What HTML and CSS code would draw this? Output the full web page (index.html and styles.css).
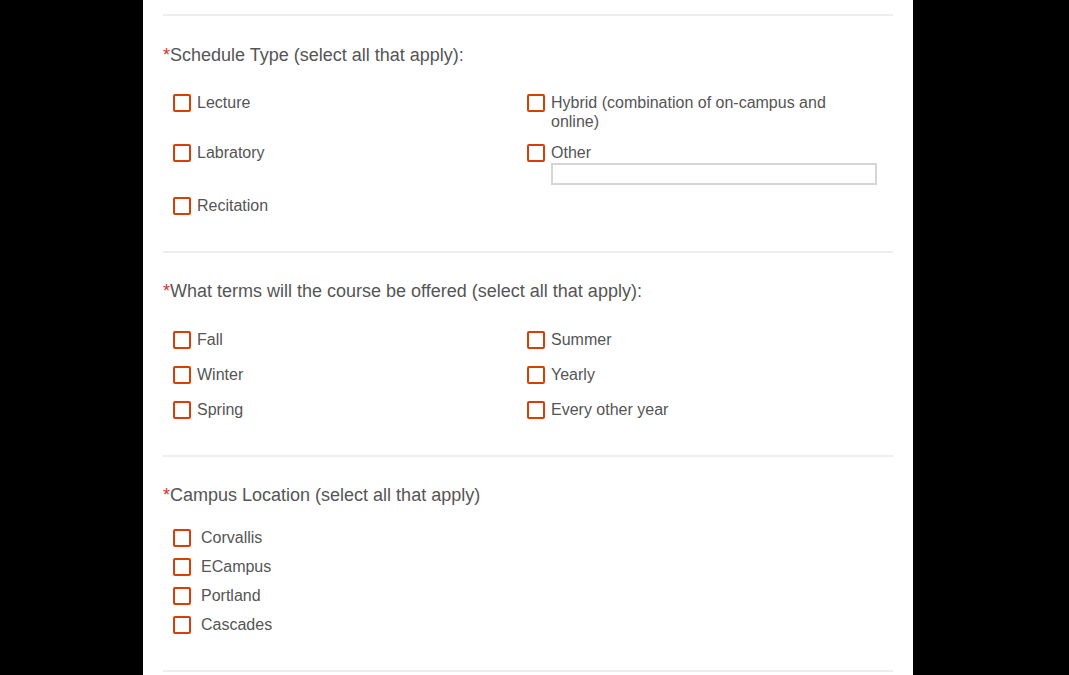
FILE: index.html
```html
<!DOCTYPE html>
<html>
<head>
<meta charset="utf-8">
<link rel="stylesheet" href="styles.css">
</head>
<body>
<div class="panel">
  <div class="section s1">
    <div class="question"><span class="req">*</span>Schedule Type (select all that apply):</div>
    <div class="grid g1">
      <div class="opt"><span class="box"></span><span class="lbl">Lecture</span></div>
      <div class="opt"><span class="box"></span><span class="lbl">Hybrid (combination of on-campus and online)</span></div>
      <div class="opt"><span class="box"></span><span class="lbl">Labratory</span></div>
      <div class="opt"><span class="box"></span><span class="lbl">Other<span class="other"></span></span></div>
      <div class="opt"><span class="box"></span><span class="lbl">Recitation</span></div>
    </div>
  </div>
  <div class="section s2">
    <div class="question"><span class="req">*</span>What terms will the course be offered (select all that apply):</div>
    <div class="grid g2">
      <div class="opt"><span class="box"></span><span class="lbl">Fall</span></div>
      <div class="opt"><span class="box"></span><span class="lbl">Summer</span></div>
      <div class="opt"><span class="box"></span><span class="lbl">Winter</span></div>
      <div class="opt"><span class="box"></span><span class="lbl">Yearly</span></div>
      <div class="opt"><span class="box"></span><span class="lbl">Spring</span></div>
      <div class="opt"><span class="box"></span><span class="lbl">Every other year</span></div>
    </div>
  </div>
  <div class="section s3">
    <div class="question q3"><span class="req">*</span>Campus Location (select all that apply)</div>
    <div class="list">
      <div class="opt wide"><span class="box"></span><span class="lbl">Corvallis</span></div>
      <div class="opt wide"><span class="box"></span><span class="lbl">ECampus</span></div>
      <div class="opt wide"><span class="box"></span><span class="lbl">Portland</span></div>
      <div class="opt wide"><span class="box"></span><span class="lbl">Cascades</span></div>
    </div>
  </div>
  <div class="section last"></div>
</div>
</body>
</html>
```
FILE: styles.css
```css
html, body {
  margin: 0;
  padding: 0;
  background: #000;
  height: 100%;
  overflow: hidden;
}
body {
  font-family: "Liberation Sans", Arial, sans-serif;
  color: #555555;
}
.panel {
  width: 730px;
  margin-left: 143px;
  padding: 14px 20px 0;
  background: #fff;
  min-height: 100%;
}
.section {
  border-top: 2px solid #eeeeee;
  padding: 28px 0 36px;
}
.s1 {
  padding-top: 29px;
}
.section.last {
  padding: 0;
  height: 20px;
}
.question {
  font-size: 18px;
  line-height: 20px;
  margin-bottom: 28px;
}
.s2 .question {
  margin-bottom: 29px;
}
.q3 {
  margin-bottom: 23px;
}
.req {
  color: #d9322b;
}
.grid {
  display: grid;
  grid-template-columns: 354px 360px;
}
.g1 {
  row-gap: 12px;
}
.g2 {
  row-gap: 16px;
}
.list {
  display: flex;
  flex-direction: column;
  gap: 10px;
}
.opt {
  display: flex;
  align-items: flex-start;
  padding-left: 10px;
  font-size: 16px;
  line-height: 19px;
}
.box {
  flex: none;
  width: 18px;
  height: 18px;
  box-sizing: border-box;
  border: 2px solid #d73f09;
  border-radius: 2px;
  margin-top: 1px;
  margin-right: 6px;
}
.wide .box {
  margin-right: 10px;
}
.lbl {
  flex: 1;
}
.other {
  display: block;
  width: 326px;
  height: 22px;
  box-sizing: border-box;
  border: 2px solid #d6d6d6;
  margin-top: 1px;
  margin-bottom: -1px;
}
```
